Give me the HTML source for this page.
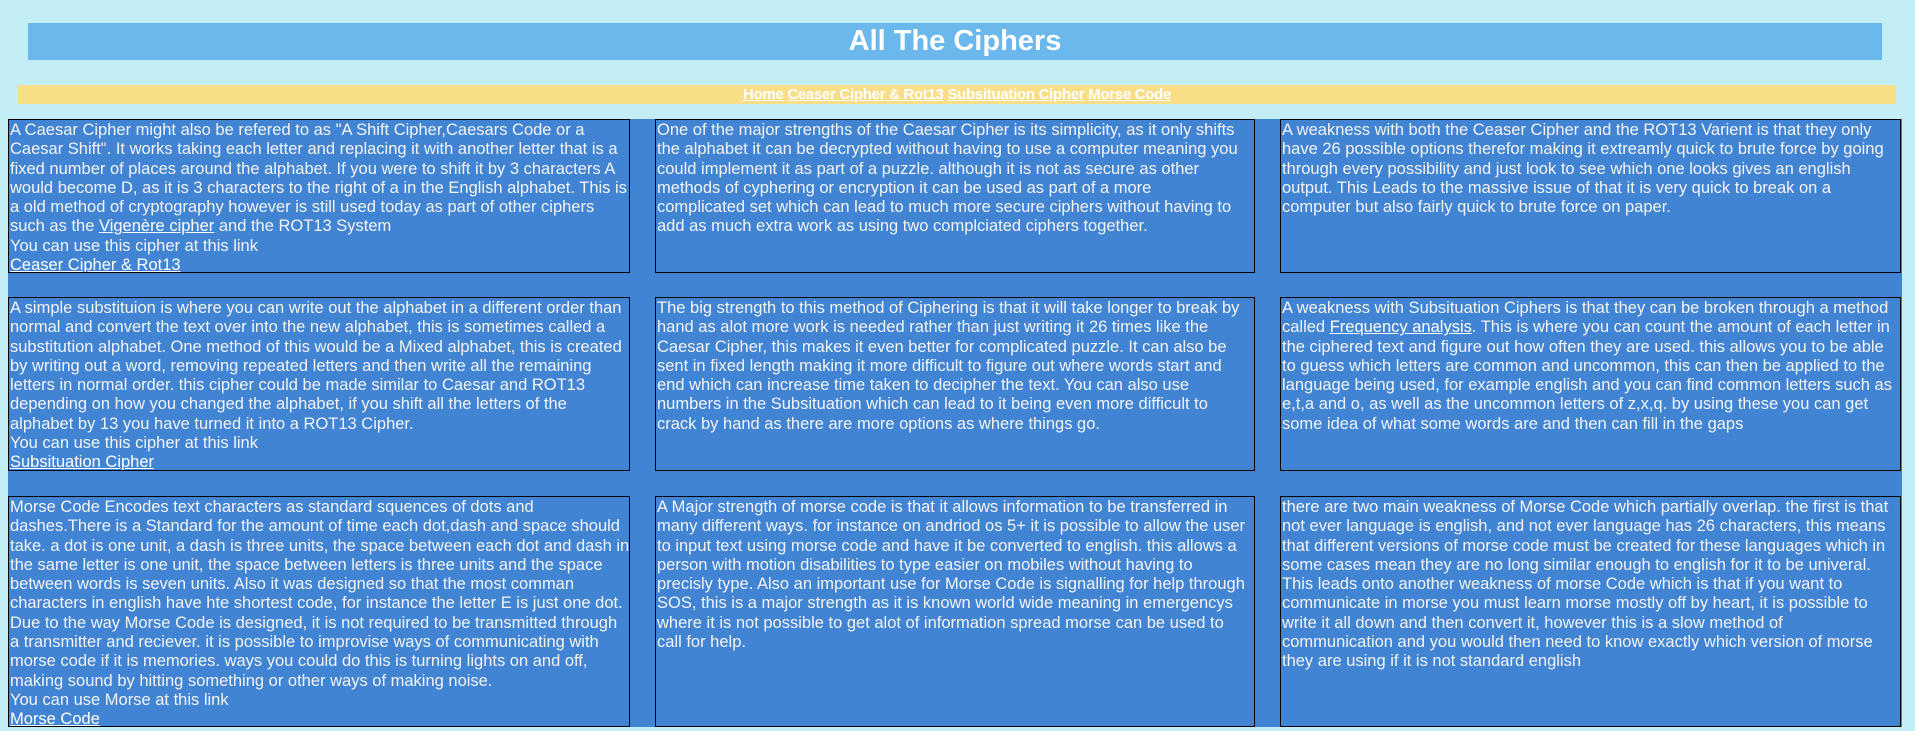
<!DOCTYPE html>
<html><head><meta charset="utf-8"><style>
body{margin:0;width:1915px;height:731px;background:#c4eef5;font-family:"Liberation Sans",sans-serif;position:relative;overflow:hidden}
.t{position:absolute;left:28px;top:23px;width:1854px;height:37px;background:#6ab8ec;color:#fff;font-weight:bold;font-size:29px;text-align:center;line-height:37px}
.n{position:absolute;left:18px;top:85px;width:1878px;height:19px;background:#f8df87;text-align:center;line-height:19px;font-size:15px;font-weight:bold;letter-spacing:-0.3px}
.n a{color:#fff;text-decoration:underline}
.g{position:absolute;left:8px;top:119px;width:1894px;height:608px;background:#4184d4}
.b{position:absolute;box-sizing:border-box;border:1px solid #000;color:#f4f4f4;font-size:16.5px;line-height:19.3px;padding:1px 1px;white-space:nowrap;overflow:hidden}
.b a{color:#fff;text-decoration:underline}
</style></head><body>
<div class="t">All The Ciphers</div>
<div class="n"><a>Home</a> <a>Ceaser Cipher &amp; Rot13</a> <a>Subsituation Cipher</a> <a>Morse Code</a></div>
<div class="g"></div>
<div class="b" style="left:8px;top:119px;width:622px;height:154px">A Caesar Cipher might also be refered to as "A Shift Cipher,Caesars Code or a<br>Caesar Shift". It works taking each letter and replacing it with another letter that is a<br>fixed number of places around the alphabet. If you were to shift it by 3 characters A<br>would become D, as it is 3 characters to the right of a in the English alphabet. This is<br>a old method of cryptography however is still used today as part of other ciphers<br>such as the <a>Vigenère cipher</a> and the ROT13 System<br>You can use this cipher at this link<br><a>Ceaser Cipher &amp; Rot13</a></div>
<div class="b" style="left:655px;top:119px;width:600px;height:154px">One of the major strengths of the Caesar Cipher is its simplicity, as it only shifts<br>the alphabet it can be decrypted without having to use a computer meaning you<br>could implement it as part of a puzzle. although it is not as secure as other<br>methods of cyphering or encryption it can be used as part of a more<br>complicated set which can lead to much more secure ciphers without having to<br>add as much extra work as using two complciated ciphers together.</div>
<div class="b" style="left:1280px;top:119px;width:621px;height:154px">A weakness with both the Ceaser Cipher and the ROT13 Varient is that they only<br>have 26 possible options therefor making it extreamly quick to brute force by going<br>through every possibility and just look to see which one looks gives an english<br>output. This Leads to the massive issue of that it is very quick to break on a<br>computer but also fairly quick to brute force on paper.</div>
<div class="b" style="left:8px;top:297px;width:622px;height:174px">A simple substituion is where you can write out the alphabet in a different order than<br>normal and convert the text over into the new alphabet, this is sometimes called a<br>substitution alphabet. One method of this would be a Mixed alphabet, this is created<br>by writing out a word, removing repeated letters and then write all the remaining<br>letters in normal order. this cipher could be made similar to Caesar and ROT13<br>depending on how you changed the alphabet, if you shift all the letters of the<br>alphabet by 13 you have turned it into a ROT13 Cipher.<br>You can use this cipher at this link<br><a>Subsituation Cipher</a></div>
<div class="b" style="left:655px;top:297px;width:600px;height:174px">The big strength to this method of Ciphering is that it will take longer to break by<br>hand as alot more work is needed rather than just writing it 26 times like the<br>Caesar Cipher, this makes it even better for complicated puzzle. It can also be<br>sent in fixed length making it more difficult to figure out where words start and<br>end which can increase time taken to decipher the text. You can also use<br>numbers in the Subsituation which can lead to it being even more difficult to<br>crack by hand as there are more options as where things go.</div>
<div class="b" style="left:1280px;top:297px;width:621px;height:174px">A weakness with Subsituation Ciphers is that they can be broken through a method<br>called <a>Frequency analysis</a>. This is where you can count the amount of each letter in<br>the ciphered text and figure out how often they are used. this allows you to be able<br>to guess which letters are common and uncommon, this can then be applied to the<br>language being used, for example english and you can find common letters such as<br>e,t,a and o, as well as the uncommon letters of z,x,q. by using these you can get<br>some idea of what some words are and then can fill in the gaps</div>
<div class="b" style="left:8px;top:496px;width:622px;height:231px">Morse Code Encodes text characters as standard squences of dots and<br>dashes.There is a Standard for the amount of time each dot,dash and space should<br>take. a dot is one unit, a dash is three units, the space between each dot and dash in<br>the same letter is one unit, the space between letters is three units and the space<br>between words is seven units. Also it was designed so that the most comman<br>characters in english have hte shortest code, for instance the letter E is just one dot.<br>Due to the way Morse Code is designed, it is not required to be transmitted through<br>a transmitter and reciever. it is possible to improvise ways of communicating with<br>morse code if it is memories. ways you could do this is turning lights on and off,<br>making sound by hitting something or other ways of making noise.<br>You can use Morse at this link<br><a>Morse Code</a></div>
<div class="b" style="left:655px;top:496px;width:600px;height:231px">A Major strength of morse code is that it allows information to be transferred in<br>many different ways. for instance on andriod os 5+ it is possible to allow the user<br>to input text using morse code and have it be converted to english. this allows a<br>person with motion disabilities to type easier on mobiles without having to<br>precisly type. Also an important use for Morse Code is signalling for help through<br>SOS, this is a major strength as it is known world wide meaning in emergencys<br>where it is not possible to get alot of information spread morse can be used to<br>call for help.</div>
<div class="b" style="left:1280px;top:496px;width:621px;height:231px">there are two main weakness of Morse Code which partially overlap. the first is that<br>not ever language is english, and not ever language has 26 characters, this means<br>that different versions of morse code must be created for these languages which in<br>some cases mean they are no long similar enough to english for it to be univeral.<br>This leads onto another weakness of morse Code which is that if you want to<br>communicate in morse you must learn morse mostly off by heart, it is possible to<br>write it all down and then convert it, however this is a slow method of<br>communication and you would then need to know exactly which version of morse<br>they are using if it is not standard english</div>
</body></html>
